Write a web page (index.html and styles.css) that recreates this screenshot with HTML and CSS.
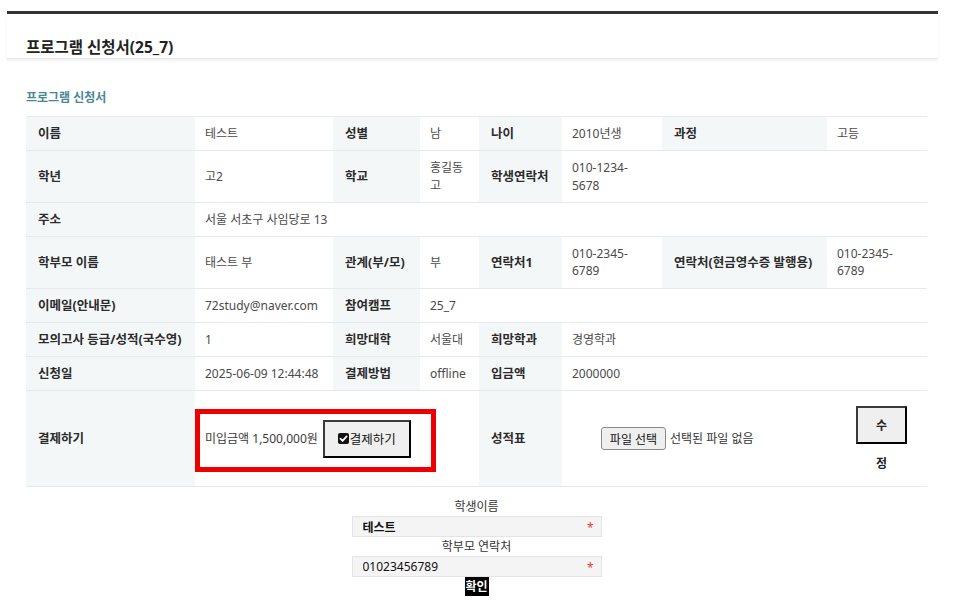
FILE: index.html
```html
<!DOCTYPE html>
<html lang="ko">
<head>
<meta charset="utf-8">
<title>프로그램 신청서(25_7)</title>
<link rel="stylesheet" href="styles.css">
</head>
<body>
<div class="page">
  <div class="topbar"></div>
  <header class="head">
    <h1 class="head-title">프로그램 신청서(25_7)</h1>
  </header>
  <main class="content">
    <h2 class="sec-title">프로그램 신청서</h2>
    <table class="info">
      <colgroup>
        <col class="w1"><col class="w2"><col class="w3"><col class="w4">
        <col class="w5"><col class="w6"><col class="w7"><col class="w8">
      </colgroup>
      <tbody>
        <tr>
          <th>이름</th><td>테스트</td><th>성별</th><td>남</td>
          <th>나이</th><td>2010년생</td><th>과정</th><td>고등</td>
        </tr>
        <tr>
          <th>학년</th><td>고2</td><th>학교</th><td>홍길동고</td>
          <th>학생연락처</th><td>010-1234-5678</td><td></td><td></td>
        </tr>
        <tr>
          <th>주소</th><td colspan="7">서울 서초구 사임당로 13</td>
        </tr>
        <tr>
          <th>학부모 이름</th><td>태스트 부</td><th>관계(부/모)</th><td>부</td>
          <th>연락처1</th><td>010-2345-6789</td><th>연락처(현금영수증 발행용)</th><td>010-2345-6789</td>
        </tr>
        <tr>
          <th>이메일(안내문)</th><td>72study@naver.com</td><th>참여캠프</th><td>25_7</td>
          <td colspan="4"></td>
        </tr>
        <tr>
          <th>모의고사 등급/성적(국수영)</th><td>1</td><th>희망대학</th><td>서울대</td>
          <th>희망학과</th><td colspan="3">경영학과</td>
        </tr>
        <tr>
          <th>신청일</th><td>2025-06-09 12:44:48</td><th>결제방법</th><td>offline</td>
          <th>입금액</th><td colspan="3">2000000</td>
        </tr>
        <tr class="tall">
          <th>결제하기</th>
          <td colspan="3" class="pay-cell">
            <div class="pay-box">
              <span class="due">미입금액 1,500,000원</span>
              <button type="button" class="btn-pay"><svg class="chk" viewBox="0 0 12 12" width="11" height="11" aria-hidden="true"><rect x="0" y="0" width="12" height="12" rx="2.2" fill="#111"/><path d="M2.6 6.2 L5 8.5 L9.4 3.7" fill="none" stroke="#fff" stroke-width="1.9" stroke-linecap="round" stroke-linejoin="round"/></svg>결제하기</button>
            </div>
          </td>
          <th>성적표</th>
          <td colspan="3" class="file-cell">
            <div class="file-row">
              <button type="button" class="btn-file">파일 선택</button>
              <span class="file-none">선택된 파일 없음</span>
              <button type="button" class="btn-edit"><span class="edit-txt">수정</span></button>
            </div>
          </td>
        </tr>
      </tbody>
    </table>

    <form class="check">
      <div class="lbl">학생이름</div>
      <div class="field"><input class="inp inp-bold" type="text" value="테스트"><span class="req">*</span></div>
      <div class="lbl">학부모 연락처</div>
      <div class="field"><input class="inp" type="text" value="01023456789"><span class="req">*</span></div>
      <button type="button" class="btn-ok">확인</button>
    </form>
  </main>
</div>
</body>
</html>
```

FILE: styles.css
```css
* { box-sizing: border-box; }

html, body {
  margin: 0;
  padding: 0;
  background: #ffffff;
}

body {
  font-family: "Noto Sans", "Noto Sans CJK KR", sans-serif;
  font-size: 12px;
  color: #333;
}

.page {
  margin-left: 7px;
  width: 931px;
}

.topbar {
  margin-top: 11px;
  height: 3px;
  background: #333333;
}

.head {
  padding: 23px 0 0 19px;
  border-bottom: 1px solid #e4e6e7;
  box-shadow: 0 2px 3px rgba(0, 0, 0, 0.06);
}

.head-title {
  margin: 0;
  font-size: 15.5px;
  line-height: 21px;
  font-weight: 700;
  color: #222;
}

.content {
  padding: 0 11px 0 19px;
}

.sec-title {
  margin: 31px 0 10px;
  font-size: 12px;
  line-height: 16px;
  font-weight: 700;
  color: #4a8796;
}

.info {
  width: 901px;
  table-layout: fixed;
  border-collapse: collapse;
  border-top: 1px solid #e6eaec;
}

.w1 { width: 169px; }
.w2 { width: 138px; }
.w3 { width: 87px; }
.w4 { width: 59px; }
.w5 { width: 83px; }
.w6 { width: 100px; }
.w7 { width: 165px; }
.w8 { width: 100px; }

.info th,
.info td {
  padding: 8px 10px;
  line-height: 17.25px;
  vertical-align: middle;
  text-align: left;
  border-bottom: 1px solid #e6eaec;
}

.info th {
  padding-left: 12px;
  padding-right: 4px;
  background: #f4f7f8;
  font-size: 12.5px;
  font-weight: 700;
  color: #2b2b2b;
  white-space: nowrap;
}

.info td {
  background: #ffffff;
  color: #4a4a4a;
  overflow-wrap: break-word;
}

.info .tall th,
.info .tall td {
  height: 96px;
}

.info .pay-cell {
  padding: 0;
}

.pay-box {
  display: inline-flex;
  align-items: center;
  border: 5px solid #ee0000;
  padding: 6px 20px 9px 5px;
  margin-top: 3px;
}

.due {
  color: #3a3a3a;
  white-space: nowrap;
}

.btn-pay {
  margin-left: 5px;
  width: 88px;
  height: 38px;
  padding: 0;
  display: inline-flex;
  align-items: center;
  justify-content: center;
  background: #efefef;
  border: 2px solid;
  border-color: #3a3a3a #000 #000 #3a3a3a;
  font-family: inherit;
  font-size: 12.5px;
  color: #111;
}

.chk {
  display: block;
  margin-right: 1px;
}

.info .file-cell {
  padding: 0 20px 0 39px;
}

.file-row {
  display: flex;
  align-items: center;
  height: 66px;
}

.btn-file {
  width: 65px;
  height: 23px;
  padding: 0;
  background: #efefef;
  border: 1px solid #8a8a8a;
  border-radius: 3px;
  font-family: inherit;
  font-size: 12px;
  color: #111;
}

.file-none {
  margin-left: 4px;
  color: #333;
}

.btn-edit {
  margin-left: auto;
  align-self: flex-start;
  width: 51px;
  height: 38px;
  padding: 0;
  display: flex;
  align-items: flex-start;
  justify-content: center;
  overflow: visible;
  background: #efefef;
  border: 2px solid;
  border-color: #3a3a3a #000 #000 #3a3a3a;
  font-family: inherit;
  font-size: 12px;
  font-weight: 700;
  color: #222;
}

.edit-txt {
  display: block;
  width: 13px;
  line-height: 38px;
  margin-top: -1px;
  word-break: break-all;
}

.check {
  width: 250px;
  margin: 10px auto 0;
  display: flex;
  flex-direction: column;
  align-items: center;
}

.lbl {
  line-height: 19px;
  font-size: 12px;
  color: #333;
}

.field {
  width: 250px;
  height: 21px;
  display: flex;
  align-items: center;
  background: #f4f4f4;
  border: 1px solid #e4e4e4;
  padding: 0 7px 0 10px;
}

.inp {
  flex: 1;
  min-width: 0;
  height: 19px;
  border: 0;
  padding: 0;
  background: transparent;
  font-family: inherit;
  font-size: 12px;
  color: #111;
  outline: none;
}

.inp-bold {
  font-weight: 700;
}

.req {
  color: #e53935;
  font-size: 12px;
  line-height: 19px;
  margin-top: 2px;
}

.btn-ok {
  height: 19px;
  padding: 0;
  border: 0;
  border-radius: 0;
  background: #000;
  color: #fff;
  font-family: inherit;
  font-size: 12px;
  font-weight: 700;
  line-height: 19px;
  width: 24px;
}
```
